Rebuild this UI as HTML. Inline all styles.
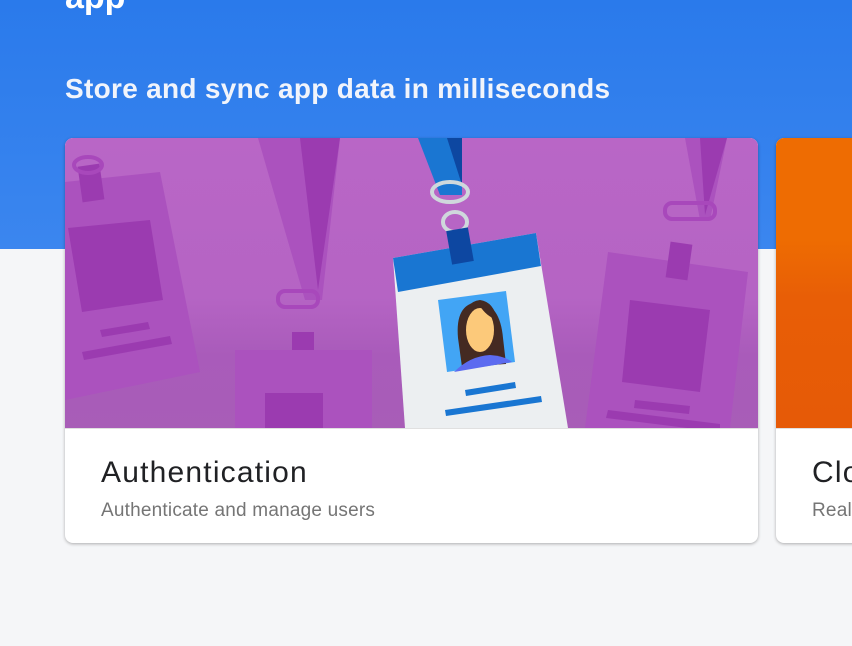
<!DOCTYPE html>
<html><head><meta charset="utf-8"><style>
html,body{margin:0;padding:0;width:852px;height:646px;overflow:hidden;background:#f5f6f8;font-family:"Liberation Sans",sans-serif}
.top{position:absolute;left:0;top:0;width:852px;height:249px;background:linear-gradient(#2a7aeb,#3b86ef)}
.app{position:absolute;left:65px;top:-22px;color:#fff;font-size:34px;font-weight:bold}
.sub{position:absolute;left:65px;top:73px;color:#f1f4fb;font-size:28px;font-weight:bold;letter-spacing:0.3px}
.card{position:absolute;top:138px;height:405px;background:#fff;border-radius:8px;overflow:hidden;box-shadow:0 1px 3px rgba(0,0,0,.3)}
.c1{left:65px;width:693px}
.c2{left:776px;width:100px}
.img{position:absolute;left:0;top:0;width:100%;height:290px;border-bottom:1px solid #e0e0e0}
.t{position:absolute;left:36px;top:318px;font-size:30px;color:#202124;letter-spacing:1.2px}
.d{position:absolute;left:36px;top:362px;font-size:19px;color:#757575;letter-spacing:0.2px}
</style></head><body>
<div class="top"><div class="app">app</div><div class="sub">Store and sync app data in milliseconds</div></div>
<div class="card c1">
<svg class="img" viewBox="65 138 693 290" preserveAspectRatio="none">
<defs><linearGradient id="bg" x1="0" y1="0" x2="0" y2="1"><stop offset="0" stop-color="#b966c6"/><stop offset=".55" stop-color="#b564c4"/><stop offset=".75" stop-color="#a95bba"/><stop offset="1" stop-color="#a85db7"/></linearGradient></defs>
<rect x="65" y="138" width="693" height="290" fill="url(#bg)"/>
<polygon points="65,182 160,172 200,372 65,400" fill="#ab52be"/>
<polygon points="68,228 150,220 163,300 82,312" fill="#9b3bb0"/>
<polygon points="100,330 148,322 150,329 102,337" fill="#9b3bb0"/>
<polygon points="82,352 170,336 172,344 84,360" fill="#9b3bb0"/>
<rect x="80" y="165" width="22" height="36" fill="#9b3bb0" transform="rotate(-8 91 183)"/>
<ellipse cx="88" cy="165" rx="14" ry="8" fill="none" stroke="#a848bb" stroke-width="4"/>
<polygon points="258,138 340,138 322,300 305,300" fill="#ab52be"/>
<polygon points="300,138 340,138 318,290" fill="#9b3bb0"/>
<rect x="278" y="291" width="40" height="16" rx="7" fill="none" stroke="#a848bb" stroke-width="4"/>
<rect x="292" y="332" width="22" height="34" fill="#9b3bb0"/>
<polygon points="235,350 372,350 372,428 235,428" fill="#ab52be"/>
<rect x="265" y="393" width="58" height="35" fill="#9b3bb0"/>
<polygon points="685,138 727,138 710,220 700,220" fill="#ab52be"/>
<polygon points="700,138 727,138 705,215" fill="#9b3bb0"/>
<rect x="665" y="203" width="50" height="16" rx="7" fill="none" stroke="#a848bb" stroke-width="4"/>
<polygon points="608,252 748,272 730,428 585,428" fill="#ab52be"/>
<polygon points="630,300 710,310 700,392 622,382" fill="#9b3bb0"/>
<rect x="668" y="243" width="22" height="36" fill="#9b3bb0" transform="rotate(8 679 261)"/>
<polygon points="635,400 690,406 689,414 634,408" fill="#9b3bb0"/>
<polygon points="608,410 720,424 720,432 606,418" fill="#9b3bb0"/>
<polygon points="418,138 462,138 462,195 440,195" fill="#1a76d2"/>
<polygon points="447,138 462,138 462,185" fill="#0d47a1"/>
<ellipse cx="450" cy="192" rx="18" ry="10" fill="none" stroke="#cfd8dc" stroke-width="4"/>
<ellipse cx="455" cy="222" rx="12" ry="10" fill="none" stroke="#cfd8dc" stroke-width="4"/>
<polygon points="393,258 536,233 568,428 405,428" fill="#eceff1"/>
<polygon points="393,258 536,233 541,266 398,292" fill="#1976d2"/>
<rect x="449" y="229" width="22" height="34" fill="#0d47a1" transform="rotate(-10 460 246)"/>
<polygon points="438,300 506,291 515,362 447,372" fill="#42a5f5"/>
<path d="M458 338 Q455 304 478 302 Q500 304 503 338 L506 364 L462 367 Z" fill="#442a22"/>
<path d="M454 372 Q470 356 490 355 Q505 356 512 362 Z" fill="#5c6bf0"/>
<ellipse cx="480" cy="330" rx="14" ry="22" fill="#fcc97a"/>
<path d="M464 322 Q470 308 480 306 Q486 316 497 320 Q494 302 480 300 Q464 302 464 322Z" fill="#442a22"/>
<polygon points="465,390 515,382 516,388 466,396" fill="#1976d2"/>
<polygon points="445,410 541,396 542,402 446,416" fill="#1976d2"/>
</svg>
<div class="t">Authentication</div>
<div class="d">Authenticate and manage users</div>
</div>
<div class="card c2">
<div class="img" style="background:linear-gradient(#ee6c02 0%,#ee6c02 35%,#e85e06 55%,#e65a07 100%)"></div>
<div class="t">Cloud</div>
<div class="d">Realtime</div>
</div>
</body></html>
